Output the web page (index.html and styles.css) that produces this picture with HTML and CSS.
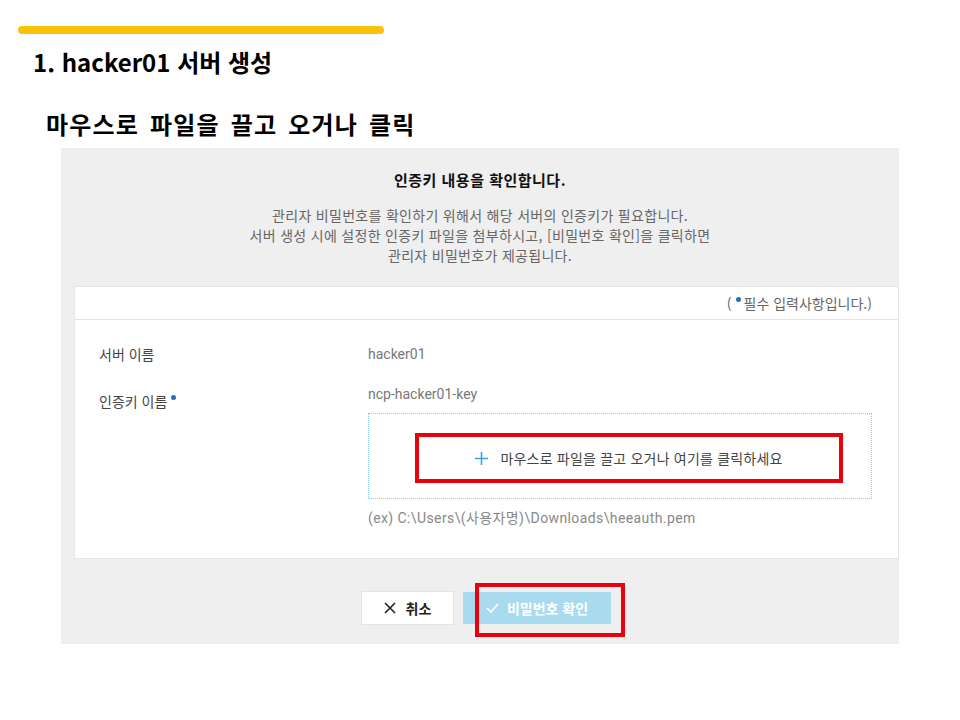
FILE: index.html
```html
<!DOCTYPE html>
<html lang="ko">
<head>
    <meta charset="UTF-8">
    <meta name="viewport" content="width=device-width, initial-scale=1.0">
    <title>hacker01 서버 생성</title>
    <link rel="stylesheet" href="styles.css">
</head>
<body>
    <div class="slide">
        <div class="accent-bar"></div>
        <h1 class="slide-title">1. hacker01 서버 생성</h1>
        <h2 class="slide-subtitle">마우스로 파일을 끌고 오거나 클릭</h2>

        <div class="modal">
            <div class="modal-head">
                <h3>인증키 내용을 확인합니다.</h3>
                <p>관리자 비밀번호를 확인하기 위해서 해당 서버의 인증키가 필요합니다.<br>
                서버 생성 시에 설정한 인증키 파일을 첨부하시고, [비밀번호 확인]을 클릭하면<br>
                관리자 비밀번호가 제공됩니다.</p>
            </div>

            <div class="form-card">
                <div class="form-note">(<span class="req-dot"></span>필수 입력사항입니다.)</div>
                <div class="form-body">
                    <div class="form-row">
                        <div class="form-label">서버 이름</div>
                        <div class="form-value">hacker01</div>
                    </div>
                    <div class="form-row key-row">
                        <div class="form-label">인증키 이름<span class="req-dot"></span></div>
                        <div class="form-value">
                            <div class="key-name">ncp-hacker01-key</div>
                            <div class="dropzone">
                                <div class="drop-target">
                                    <svg class="plus" width="13" height="13" viewBox="0 0 13 13"><path d="M6.5 0v13M0 6.5h13" stroke="#3aa6d8" stroke-width="1.6"/></svg>
                                    마우스로 파일을 끌고 오거나 여기를 클릭하세요
                                </div>
                            </div>
                            <div class="example">(ex) C:\Users\(사용자명)\Downloads\heeauth.pem</div>
                        </div>
                    </div>
                </div>
            </div>

            <div class="actions">
                <button class="btn btn-cancel">
                    <svg width="12" height="12" viewBox="0 0 12 12"><path d="M1 1l10 10M11 1L1 11" stroke="#222" stroke-width="1.6"/></svg>
                    취소
                </button>
                <div class="confirm-wrap">
                    <button class="btn btn-confirm">
                        <svg width="13" height="10" viewBox="0 0 13 10"><path d="M1 5l4 4 7-8" fill="none" stroke="#fff" stroke-width="1.6"/></svg>
                        비밀번호 확인
                    </button>
                    <div class="highlight"></div>
                </div>
            </div>
        </div>
    </div>
</body>
</html>
```

FILE: styles.css
```css
body {
    margin: 0;
    background: #fff;
    font-family: "Noto Sans CJK KR", "Noto Sans", sans-serif;
    color: #222;
}
.slide {
    width: 960px;
    height: 720px;
    padding-top: 26px;
    box-sizing: border-box;
}
.accent-bar {
    width: 366px;
    height: 8px;
    margin-left: 18px;
    background: #fcc20a;
    border-radius: 4px;
}
.slide-title {
    margin: 11px 0 0 33px;
    font-size: 24px;
    line-height: 34px;
    font-weight: bold;
    color: #000;
}
.slide-subtitle {
    margin: 30px 0 0 46px;
    font-size: 24px;
    line-height: 30px;
    font-weight: bold;
    letter-spacing: 1.2px;
    word-spacing: 3px;
    color: #000;
}
.modal {
    margin: 9px 0 0 61px;
    width: 838px;
    height: 496px;
    background: #efefef;
    display: flex;
    flex-direction: column;
}
.modal-head {
    text-align: center;
    padding-top: 22px;
}
.modal-head h3 {
    margin: 0;
    font-size: 15px;
    line-height: 20px;
    font-weight: bold;
    letter-spacing: 0.5px;
    color: #111;
}
.modal-head p {
    margin: 15px 0 0;
    font-size: 14px;
    line-height: 20px;
    letter-spacing: 0.3px;
    color: #666;
}
.form-card {
    margin: 22px 1px 0 14px;
    height: 271px;
    background: #fff;
    box-shadow: 0 0 0 1px #e6e6e6;
}
.form-note {
    height: 33px;
    line-height: 32px;
    box-sizing: border-box;
    border-bottom: 1px solid #e3e3e3;
    text-align: right;
    padding-right: 26px;
    font-size: 14px;
    color: #666;
}
.req-dot {
    display: inline-block;
    width: 5px;
    height: 5px;
    border-radius: 50%;
    background: #1c72c4;
    vertical-align: 7px;
    margin: 0 3px 0 4px;
}
.form-body {
    padding: 24px 26px 0 24px;
}
.form-row {
    display: grid;
    grid-template-columns: 269px 1fr;
    font-size: 14px;
    line-height: 20px;
}
.form-label {
    color: #444;
}
.form-value {
    font-family: Roboto, "Noto Sans CJK KR", sans-serif;
    color: #777;
}
.key-row {
    margin-top: 20px;
}
.key-row .form-label {
    padding-top: 7px;
}
.dropzone {
    margin-top: 9px;
    height: 86px;
    box-sizing: border-box;
    border: 1px dotted #8fcde6;
    padding: 19px 28px 0 46px;
    font-family: "Noto Sans CJK KR", sans-serif;
}
.drop-target {
    height: 50px;
    box-sizing: border-box;
    border: 4px solid #e8000b;
    display: flex;
    align-items: center;
    justify-content: center;
    gap: 12px;
    color: #444;
    font-size: 14px;
    letter-spacing: 0.2px;
}
.example {
    margin-top: 9px;
    color: #888;
    letter-spacing: 0.4px;
}
.actions {
    display: flex;
    justify-content: center;
    gap: 10px;
    padding: 34px 0 0 13px;
}
.btn {
    height: 32px;
    border: none;
    font-family: inherit;
    font-size: 14px;
    font-weight: bold;
    display: flex;
    align-items: center;
    justify-content: center;
    gap: 10px;
    cursor: pointer;
}
.btn-cancel {
    width: 91px;
    background: #fff;
    color: #222;
    box-shadow: 0 0 0 1px #e4e4e4;
}
.btn-confirm {
    width: 148px;
    background: #a9dbef;
    color: #fff;
    gap: 8px;
}
.confirm-wrap {
    position: relative;
}
.highlight {
    position: absolute;
    left: 12px;
    right: -14px;
    top: -9px;
    bottom: -13px;
    border: 4px solid #e8000b;
}
```
